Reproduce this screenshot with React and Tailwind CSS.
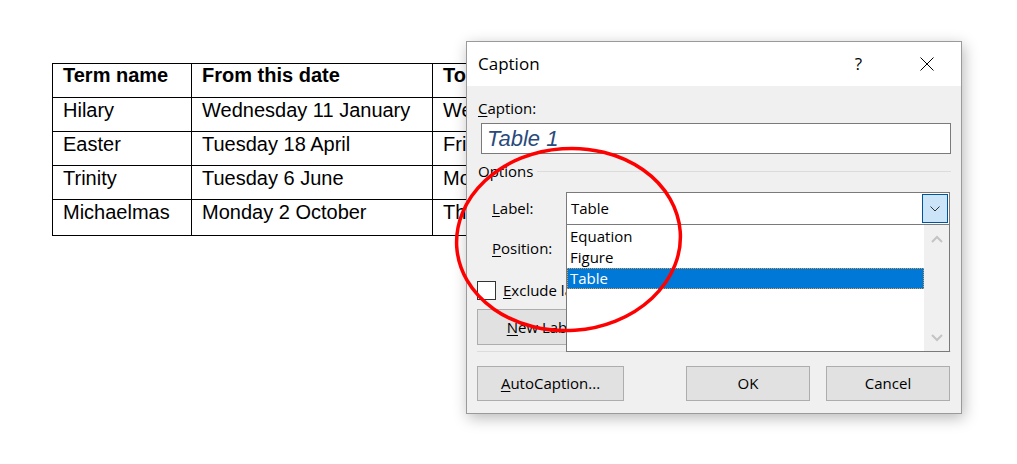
import React from 'react';

const rows = [
  ['Hilary', 'Wednesday 11 January', 'Wednesday 15 March'],
  ['Easter', 'Tuesday 18 April', 'Friday 16 June'],
  ['Trinity', 'Tuesday 6 June', 'Monday 28 August'],
  ['Michaelmas', 'Monday 2 October', 'Thursday 21 December'],
];

// access-key letter gets underlined, like the Win32 dialog
const key = 'first-letter:underline first-letter:underline-offset-2';

const Chevron = ({ up, className }) => (
  <svg width="12" height="8" viewBox="0 0 12 8" className={className}>
    <path d={up ? 'M1 7 L6 2 L11 7' : 'M1 1 L6 6 L11 1'} fill="none" stroke="currentColor" strokeWidth="2" />
  </svg>
);

const TermTable = () => (
  <div className="pl-[52px] pt-[63px] font-['Liberation_Sans',Arial,sans-serif] text-[20px] leading-[23px] text-black">
    <div className="grid grid-cols-[139px_241px_260px] w-max border-l border-t border-black">
      {['Term name', 'From this date', 'To this date'].map((h) => (
        <div key={h} className="h-[34px] border-r border-b border-black pl-[10px] font-bold whitespace-nowrap overflow-hidden">
          {h}
        </div>
      ))}
      {rows.map((r, i) =>
        r.map((c) => (
          <div
            key={c}
            className={`${i === rows.length - 1 ? 'h-[36px]' : 'h-[34px]'} border-r border-b border-black pl-[10px] pt-[1px] whitespace-nowrap overflow-hidden`}
          >
            {c}
          </div>
        ))
      )}
    </div>
  </div>
);

const Button = ({ children, className = '' }) => (
  <div className={`flex items-center justify-center border border-[#adadad] bg-[#e1e1e1] ${className}`}>{children}</div>
);

const CaptionDialog = () => (
  <div className="absolute left-[466px] top-[41px] w-[496px] border border-[#9a9a9a] bg-[#f0f0f0] shadow-[2px_4px_14px_rgba(0,0,0,0.28)] font-['Open_Sans',sans-serif] text-[15px] text-black">
    <div className="h-[44px] bg-white flex items-center pl-[11px] pr-[27px]">
      <span className="text-[17px]">Caption</span>
      <span className="ml-auto text-[17px]">?</span>
      <svg width="14" height="14" viewBox="0 0 14 14" className="ml-[58px]">
        <path d="M0.5 0.5 L13.5 13.5 M13.5 0.5 L0.5 13.5" stroke="#000" strokeWidth="1" />
      </svg>
    </div>

    <div className="px-[10px] pt-[12px] pb-[12px]">
      <div className={`h-[20px] leading-[20px] pl-[1px] ${key}`}>Caption:</div>
      <div className="mt-[5px] ml-[4px] h-[31px] border border-[#7a7a7a] bg-white flex items-center pl-[5px]">
        <span className="font-['Liberation_Sans',Arial,sans-serif] italic text-[22px] text-[#2a4a7c]">Table 1</span>
      </div>

      <div className="mt-[7px] h-[20px] flex items-center pl-[1px]">
        <span>Options</span>
        <div className="flex-1 ml-[4px] h-px bg-[#dcdcdc]" />
      </div>

      <div className="mt-[11px] h-[33px] flex items-center">
        <span className={`w-[89px] pl-[15px] ${key}`}>Label:</span>
        <div className="relative w-[384px] h-[33px] border border-[#7a7a7a] bg-white flex items-center">
          <span className="pl-[4px]">Table</span>
          <div className="ml-auto mr-px w-[26px] h-[29px] border border-[#005499] bg-[#cce4f7] flex items-center justify-center text-[#333]">
            <svg width="10" height="6" viewBox="0 0 10 6">
              <path d="M0.5 0.5 L5 5 L9.5 0.5" fill="none" stroke="currentColor" strokeWidth="1" />
            </svg>
          </div>

          <div className="absolute left-[-1px] top-full w-[384px] h-[128px] border border-[#7a7a7a] bg-white flex z-10">
            <div className="flex-1 pt-px">
              <div className="h-[21px] leading-[21px] pl-[3px]">Equation</div>
              <div className="h-[21px] leading-[21px] pl-[3px]">Figure</div>
              <div className="h-[21px] leading-[21px] pl-[3px] bg-[#0078d7] text-white outline outline-1 outline-dotted outline-offset-[-1px] outline-[#e39a3c]">
                Table
              </div>
            </div>
            <div className="w-[25px] bg-[#f0f0f0] flex flex-col items-center justify-between pt-[10px] pb-[9px] text-[#c4c4c4]">
              <Chevron up />
              <Chevron />
            </div>
          </div>
        </div>
      </div>

      <div className="mt-[8px] h-[31px] flex items-center">
        <span className={`w-[89px] pl-[15px] ${key}`}>Position:</span>
        <div className="w-[384px] h-[31px] border border-[#7a7a7a] bg-white flex items-center pl-[4px]">Below selected item</div>
      </div>

      <div className="mt-[17px] h-[19px] flex items-center">
        <div className="w-[19px] h-[19px] border border-[#333] bg-white" />
        <span className={`ml-[7px] ${key}`}>Exclude label from caption</span>
      </div>

      <div className="mt-[9px] h-[36px] flex gap-[12px]">
        <Button className="w-[144px]">
          <span className={key}>New Label...</span>
        </Button>
        <Button className="w-[144px]">Delete Label</Button>
        <Button className="w-[144px]">Numbering...</Button>
      </div>

      <div className="mt-[6px] h-px bg-[#dcdcdc]" />

      <div className="mt-[14px] h-[35px] flex pr-px">
        <Button className="w-[147px]">
          <span className={key}>AutoCaption...</span>
        </Button>
        <Button className="ml-auto w-[124px]">OK</Button>
        <Button className="ml-[16px] w-[124px]">Cancel</Button>
      </div>
    </div>
  </div>
);

const App = () => {
  return (
    <div className="relative w-[1017px] h-[464px] bg-white overflow-hidden">
      <TermTable />
      <CaptionDialog />
      <svg className="absolute left-0 top-0 pointer-events-none z-20" width="1017" height="464" viewBox="0 0 1017 464">
        <ellipse cx="568.5" cy="239.5" rx="112" ry="91" transform="rotate(-4 568.5 239.5)" fill="none" stroke="#ff0000" strokeWidth="3.5" />
      </svg>
    </div>
  );
};

export default App;
